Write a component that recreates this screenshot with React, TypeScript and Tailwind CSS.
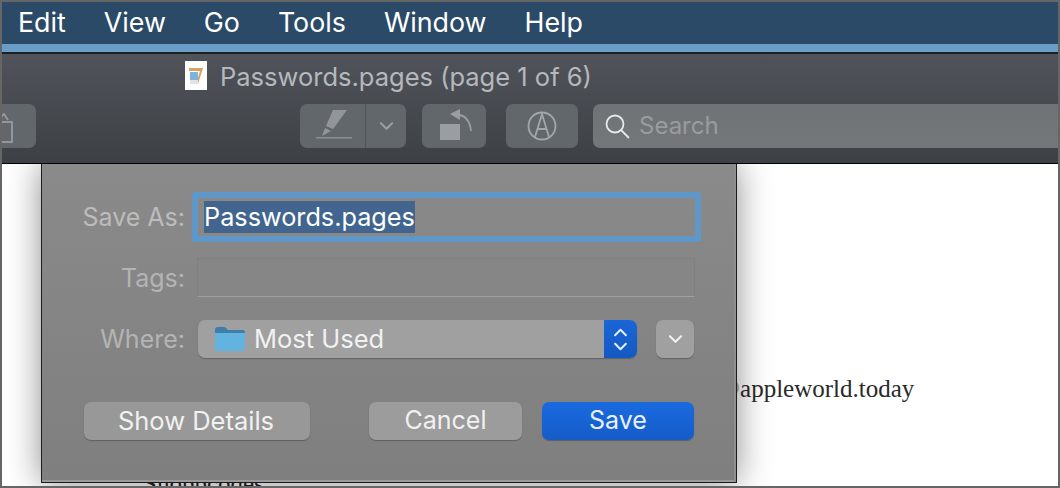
const font = { fontFamily: "Inter, 'Liberation Sans', sans-serif" }
const serif = { fontFamily: "'Liberation Serif', serif" }

const menus = ["Edit", "View", "Go", "Tools", "Window", "Help"]

function Chevron({ className, up }: { className?: string; up?: boolean }) {
  return (
    <svg viewBox="0 0 16 10" className={className} fill="none" stroke="currentColor" strokeWidth="2.2" strokeLinecap="round" strokeLinejoin="round">
      <path d={up ? "M2 8 L8 2 L14 8" : "M2 2 L8 8 L14 2"} />
    </svg>
  )
}

function DocIcon() {
  return (
    <div className="w-[22px] h-[29px] bg-white flex items-center justify-center">
      <svg viewBox="0 0 22 29" className="w-[22px] h-[29px]">
        <path d="M4 7 H18 L13 23 H11 L15 10 H4 Z" fill="#d9a25f" />
        <rect x="5" y="11" width="8" height="8" fill="#7fb2dc" />
        <rect x="5" y="19" width="8" height="4" fill="#dfe4ea" />
      </svg>
    </div>
  )
}

export default function App() {
  return (
    <div style={font} className="w-[1060px] h-[488px] overflow-hidden bg-[#666] p-[2px] flex flex-col">

      {/* MENU BAR */}
      <div className="h-[42px] shrink-0 bg-[#2a4a68] flex items-center pl-[16px] pb-[1px] text-[26.8px] text-white gap-[38px]">
        {menus.map((m) => (
          <span key={m}>{m}</span>
        ))}
      </div>
      <div className="h-[8px] shrink-0 bg-[#6a9cc8]" />
      <div className="h-[2px] shrink-0 bg-[#1d1f22]" />

      {/* TOOLBAR */}
      <div className="h-[110px] shrink-0 bg-gradient-to-b from-[#50545a] to-[#3d4146] border-b border-black">
        <div className="h-[50px] flex items-start pl-[183px] pt-[7px] gap-[13px]">
          <DocIcon />
          <span className="text-[25.5px] leading-[32px] text-[#b5b8bc]">Passwords.pages (page 1 of 6)</span>
        </div>
        <div className="h-[44px] flex">
          <div className="w-[34px] rounded-r-[7px] bg-[#62676c] overflow-hidden">
            <svg viewBox="0 0 34 44" className="w-[34px] h-[44px]" fill="none" stroke="#92969a" strokeWidth="2">
              <path d="M-4 18 H10 V38 H-4" />
              <path d="M-2 14 L2 10 L6 16" />
            </svg>
          </div>
          <div className="ml-[264px] w-[106px] rounded-[7px] bg-[#62676c] flex">
            <div className="w-[66px] border-r border-[#505459]">
              <svg viewBox="0 0 66 44" className="w-[66px] h-[44px]">
                <path d="M33 6 H47 L33 25 L26 22 Z" fill="#92969a" />
                <path d="M25 24 L31 27 L22 32 Z" fill="#92969a" />
                <rect x="16" y="33" width="36" height="1.5" fill="#8b8f93" />
              </svg>
            </div>
            <div className="flex-1 flex items-center justify-center text-[#9a9ea2]">
              <Chevron className="w-[15px] h-[10px]" />
            </div>
          </div>
          <div className="ml-[16px] w-[64px] rounded-[7px] bg-[#62676c]">
            <svg viewBox="0 0 64 44" className="w-[64px] h-[44px]">
              <rect x="18" y="20" width="20" height="16" fill="#9a9ea2" />
              <path d="M37 11 C 45 12, 48 18, 49 27" fill="none" stroke="#9a9ea2" strokeWidth="1.8" />
              <path d="M38 5 V16 L28 10 Z" fill="#9a9ea2" />
            </svg>
          </div>
          <div className="ml-[20px] w-[72px] rounded-[7px] bg-[#62676c]">
            <svg viewBox="0 0 72 44" className="w-[72px] h-[44px]" fill="none" stroke="#a3a7aa" strokeWidth="1.8">
              <circle cx="36" cy="22" r="13.5" />
              <path d="M29 33 L36 10 L43 33 M32 25 H40" />
            </svg>
          </div>
          <div className="ml-[15px] flex-1 rounded-l-[7px] bg-gradient-to-b from-[#6f7377] to-[#737779] flex items-center">
            <svg viewBox="0 0 28 28" className="w-[28px] h-[28px] ml-[11px] mt-[2px]" fill="none" stroke="#e6e8ea" strokeWidth="1.8">
              <circle cx="11" cy="11" r="8.5" />
              <path d="M17 17 L25 25" />
            </svg>
            <span className="ml-[7px] text-[24px] text-[#999c9f]">Search</span>
          </div>
        </div>
      </div>

      {/* DOCUMENT AREA */}
      <div className="relative flex-1 bg-white overflow-hidden flex">
        <p style={serif} className="absolute left-[141px] top-[306px] text-[25px] leading-[28px] text-[#222]">
          Shoppcodes
        </p>

        {/* SAVE DIALOG */}
        <div className="relative z-10 ml-[39px] w-[696px] h-[319px] shrink-0 bg-gradient-to-b from-[#8a8a8a] to-[#7f7f7f] border-x border-b border-[#1c1c1c] shadow-[0_0_32px_rgba(0,0,0,0.45)] pt-[28px] text-[25px]">

          <div className="flex items-center">
            <span className="w-[143px] leading-[36px] text-right text-[#bcbcbc]">Save As:</span>
            <div className="ml-[7px] w-[509px] h-[50px] border-[6px] border-[#5f98c8] rounded-[3px] pl-[6px] flex items-center">
              <span className="h-[32px] leading-[32px] text-[25.25px] bg-[#41658f] text-white">Passwords.pages</span>
            </div>
          </div>

          <div className="flex items-center mt-[16px]">
            <span className="w-[143px] leading-[36px] text-right text-[#b4b4b4]">Tags:</span>
            <div className="ml-[12px] w-[498px] h-[39px] bg-[#868686] border border-[#808080] border-b-[#a0a0a0]" />
          </div>

          <div className="flex items-center mt-[23px]">
            <span className="w-[143px] leading-[38px] text-right text-[#b4b4b4]">Where:</span>
            <div className="ml-[13px] w-[439px] h-[38px] rounded-[7px] bg-[#a0a0a0] shadow-[0_1px_1px_rgba(0,0,0,0.25)] flex items-center overflow-hidden">
              <svg viewBox="0 0 30 24" className="w-[30px] h-[24px] ml-[17px]">
                <path d="M0 3 Q0 0 3 0 H10 L13 3 H28 Q30 3 30 5 V8 H0 Z" fill="#3f7ea6" />
                <path d="M0 6 H30 V22 Q30 24 28 24 H2 Q0 24 0 22 Z" fill="#62b3df" />
              </svg>
              <span className="ml-[9px] leading-[38px] text-[25.5px] text-[#f1f1f1]">Most Used</span>
              <div className="ml-auto w-[33px] h-full bg-gradient-to-b from-[#1a66d8] to-[#1459c2] flex flex-col items-center justify-center gap-[5px] text-[#e4eefb]">
                <Chevron up className="w-[15px] h-[9px]" />
                <Chevron className="w-[15px] h-[9px]" />
              </div>
            </div>
            <div className="ml-[19px] w-[38px] h-[38px] rounded-[7px] bg-[#a0a0a0] shadow-[0_1px_1px_rgba(0,0,0,0.25)] flex items-center justify-center text-[#f1f1f1]">
              <Chevron className="w-[15px] h-[10px]" />
            </div>
          </div>

          <div className="flex mt-[44px] ml-[42px]">
            <button className="w-[226px] h-[38px] pr-[2px] rounded-[7px] bg-[#989898] shadow-[0_1px_1px_rgba(0,0,0,0.25)] text-[25.5px] text-[#f1f1f1]">Show Details</button>
            <button className="ml-[59px] w-[153px] h-[38px] rounded-[7px] bg-[#9c9c9c] shadow-[0_1px_1px_rgba(0,0,0,0.25)] text-[#f1f1f1]">Cancel</button>
            <button className="ml-[20px] w-[152px] h-[38px] rounded-[7px] bg-gradient-to-b from-[#1a6ae0] to-[#155cc8] shadow-[0_1px_1px_rgba(0,0,0,0.25)] text-[#e8f0fc]">Save</button>
          </div>

          <div className="absolute bottom-0 inset-x-0 h-[2px] bg-[#9a9a9a]" />
          <div className="absolute top-0 bottom-0 right-0 w-[2px] bg-[#8f8f8f]" />
        </div>

        {/* LINE OF THE DOCUMENT, PARTLY UNDER THE DIALOG */}
        <p style={serif} className="ml-[-20px] mt-[211px] text-[25px] leading-[28px] text-[#2a2a2a]">
          <span className="text-[#aaa]">@</span>appleworld.today
        </p>
      </div>
    </div>
  )
}
